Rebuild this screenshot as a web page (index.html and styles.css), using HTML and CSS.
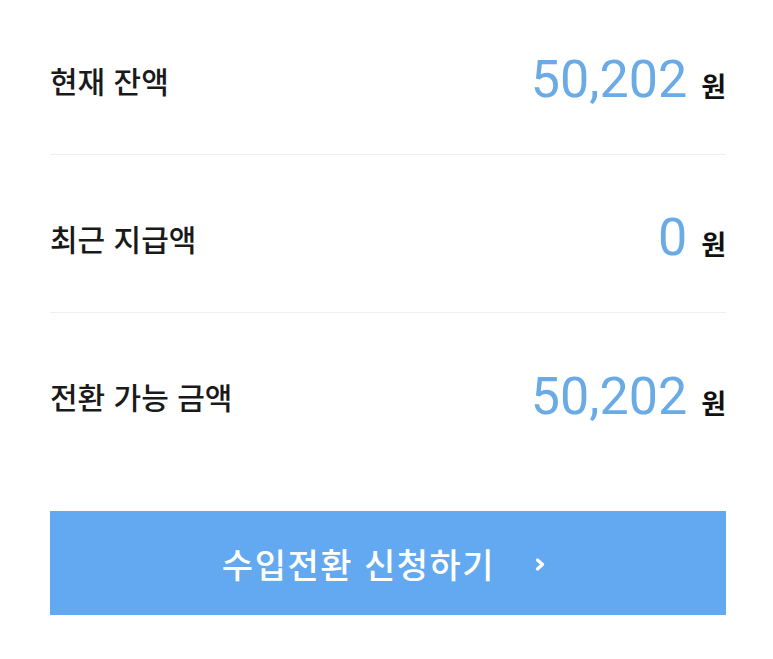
FILE: index.html
```html
<!DOCTYPE html>
<html lang="ko">
<head>
<meta charset="utf-8">
<link rel="stylesheet" href="styles.css">
</head>
<body>
<div class="page">
  <div class="list">
    <div class="row">
      <span class="label">현재 잔액</span>
      <span class="value"><span class="num">50,202</span><span class="unit">원</span></span>
    </div>
    <div class="row">
      <span class="label">최근 지급액</span>
      <span class="value"><span class="num">0</span><span class="unit">원</span></span>
    </div>
    <div class="row last">
      <span class="label">전환 가능 금액</span>
      <span class="value"><span class="num">50,202</span><span class="unit">원</span></span>
    </div>
  </div>
  <button class="cta" type="button">
    <span class="cta-text">수입전환 신청하기</span>
    <svg class="chev" width="10" height="13" viewBox="0 0 10 13"><path d="M2.5 2 L7.5 6.5 L2.5 11" fill="none" stroke="#fff" stroke-width="3.2" stroke-linecap="round" stroke-linejoin="round"/></svg>
  </button>
</div>
</body>
</html>
```

FILE: styles.css
```css
html, body {
  margin: 0;
  padding: 0;
  background: #ffffff;
}
.page {
  padding: 0 47px 0 50px;
  font-family: "Noto Sans CJK KR", "Noto Sans", sans-serif;
}
.list {
  display: flex;
  flex-direction: column;
  margin-top: -3px;
}
.row {
  height: 158px;
  display: flex;
  align-items: center;
  justify-content: space-between;
  border-bottom: 1px solid #eeefef;
  padding-top: 8px;
  box-sizing: border-box;
}
.row.last {
  border-bottom: none;
}
.label {
  font-size: 30px;
  font-weight: 500;
  color: #1a1a1a;
}
.value {
  display: flex;
  align-items: baseline;
}
.num {
  font-family: Roboto, "Liberation Sans", sans-serif;
  font-size: 52px;
  font-weight: 400;
  color: #6aaae5;
}
.unit {
  font-size: 27px;
  font-weight: 700;
  color: #111;
  margin-left: 14px;
}
.cta {
  margin-top: 40px;
  width: 100%;
  height: 104px;
  border: none;
  background: #62a9f2;
  display: flex;
  align-items: center;
  justify-content: center;
  gap: 40px;
  padding: 0 9px 0 0;
  cursor: pointer;
}
.cta-text {
  font-family: "Noto Sans CJK KR", "Noto Sans", sans-serif;
  font-size: 34px;
  font-weight: 500;
  color: #ffffff;
  letter-spacing: 1.5px;
}
.chev {
  display: block;
  margin-top: 2px;
}
```
